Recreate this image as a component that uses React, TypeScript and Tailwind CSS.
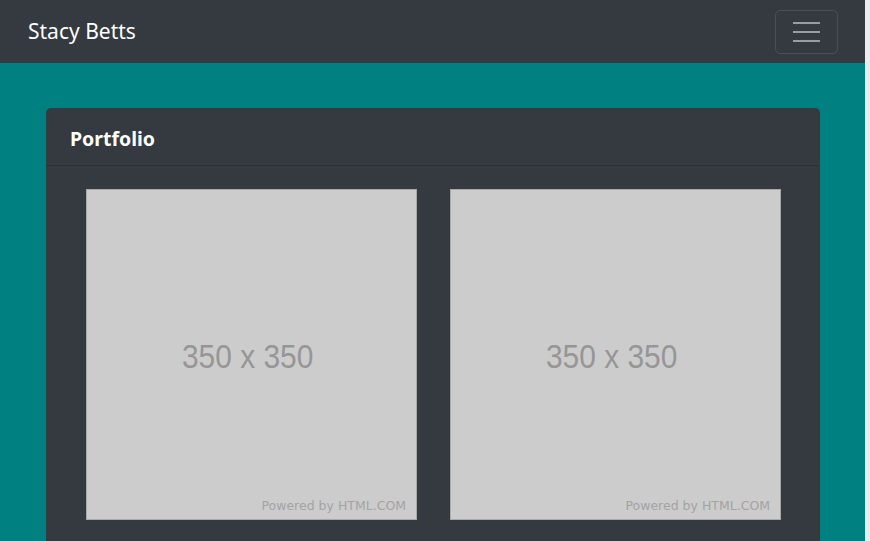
const Placeholder = () => (
  <div className="relative flex h-[331px] w-[331px] items-center justify-center border border-[#a8a8a8] bg-[#cccccc]">
    <span className="mr-[8px] inline-block origin-center scale-x-[0.88] pt-[3px] font-['Liberation_Sans',Arial,sans-serif] text-[34px] text-[#969696]">
      350 x 350
    </span>
    <span className="absolute bottom-[3px] right-[10px] font-['DejaVu_Sans',Verdana,sans-serif] text-[12.5px] text-[#a3a3a3]">
      Powered by HTML.COM
    </span>
  </div>
);

export default function App() {
  return (
    <div className="flex h-[541px] w-[870px] overflow-hidden font-['Noto_Sans','Open_Sans',sans-serif]">
      <div className="flex flex-1 flex-col">
        <nav className="flex h-[63px] shrink-0 items-center justify-between bg-[#343a40] pl-[28px] pr-[27px]">
          <span className="text-[21px] text-white">Stacy Betts</span>
          <button className="flex h-[44px] w-[63px] flex-col items-center justify-center gap-[7px] rounded-[5px] border border-white/10">
            <span className="h-[2px] w-[27px] bg-[#9a9da0]" />
            <span className="h-[2px] w-[27px] bg-[#9a9da0]" />
            <span className="h-[2px] w-[27px] bg-[#9a9da0]" />
          </button>
        </nav>
        <main className="flex-1 bg-[#008080] pl-[46px] pt-[45px]">
          <div className="w-[774px] rounded-[5px] bg-[#343a40]">
            <div className="flex h-[58px] items-center border-b border-black/15 px-[24px] pt-[4px]">
              <h2 className="text-[19.5px] font-bold text-white">Portfolio</h2>
            </div>
            <div className="flex gap-[33px] pl-[40px] pt-[23px] pb-[40px]">
              <Placeholder />
              <Placeholder />
            </div>
          </div>
        </main>
      </div>
      <div className="w-[5px] bg-[#ececec]" />
    </div>
  );
}
